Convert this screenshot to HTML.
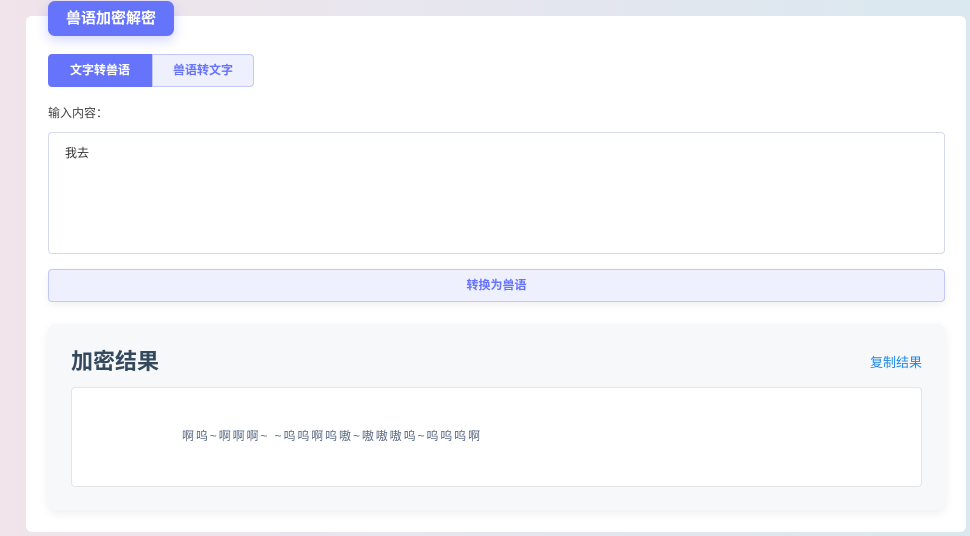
<!DOCTYPE html>
<html><head><meta charset="utf-8"><style>
*{box-sizing:border-box;margin:0;padding:0}
body{width:970px;height:536px;overflow:hidden;background:linear-gradient(90deg,#f1e4ea,#e6e6ef 50%,#dae8ef);font-family:"Liberation Sans","Noto Sans CJK SC",sans-serif;position:relative}
.card{position:absolute;left:26px;top:16px;width:940px;height:516px;background:#fff;border-radius:6px}
.title{position:absolute;left:48px;top:1px;width:126px;height:35px;background:#6674fb;border-radius:7px;color:#fff;font-weight:bold;font-size:15px;line-height:35px;text-align:center;box-shadow:0 4px 12px rgba(102,116,251,.3)}
.tabs{position:absolute;left:48px;top:54px;display:flex;height:33px}
.tab{width:104px;font-size:12px;font-weight:bold;line-height:31px;text-align:center;border:1px solid #c3c8fb}
.t1{background:#6674fb;color:#fff;border-color:#6674fb;border-radius:4px 0 0 4px}
.t2{background:#eef0fe;color:#6674fb;border-radius:0 4px 4px 0;width:102px}
.lbl{position:absolute;left:48px;top:104px;font-size:12px;color:#444}
.ta{position:absolute;left:48px;top:132px;width:897px;height:122px;border:1px solid #d6d9ea;border-radius:4px;padding:11px 16px;font-size:12px;color:#333}
.btn{position:absolute;left:48px;top:269px;width:897px;height:33px;background:#eef0fe;border:1px solid #c3c8fb;border-radius:4px;color:#6674fb;font-size:12px;font-weight:bold;text-align:center;line-height:31px;box-shadow:0 3px 8px rgba(0,0,0,.06)}
.res{position:absolute;left:48px;top:324px;width:897px;height:186px;background:#f7f8fa;border-radius:8px;box-shadow:0 3px 10px rgba(0,0,0,.07)}
.rt{position:absolute;left:23px;top:20px;font-size:22px;font-weight:bold;color:#34495e}
.cp{position:absolute;right:23px;top:28px;font-size:13px;color:#1e88e5}
.box{position:absolute;left:23px;top:63px;width:851px;height:100px;background:#fff;border:1px solid #e2e5ea;border-radius:4px;font-size:12px;color:#5a6a85;padding-left:110px;line-height:96px;letter-spacing:1.9px;white-space:pre}
</style></head><body>
<div class="card"></div>
<div class="title">兽语加密解密</div>
<div class="tabs"><div class="tab t1">文字转兽语</div><div class="tab t2">兽语转文字</div></div>
<div class="lbl">输入内容：</div>
<div class="ta">我去</div>
<div class="btn">转换为兽语</div>
<div class="res"><div class="rt">加密结果</div><div class="cp">复制结果</div>
<div class="box">啊呜~啊啊啊~ ~呜呜啊呜嗷~嗷嗷嗷呜~呜呜呜啊</div></div>
</body></html>
